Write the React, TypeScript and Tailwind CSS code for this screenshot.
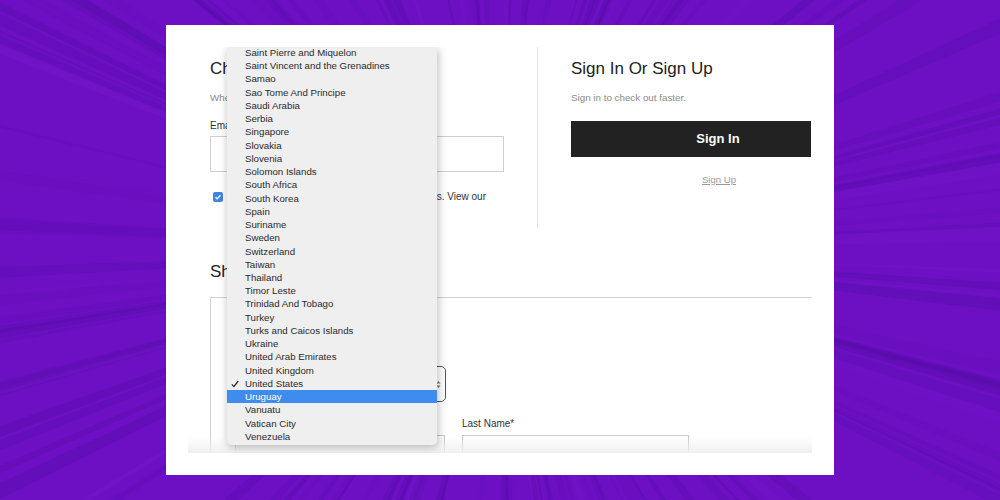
import React from 'react';

const COUNTRIES = [
  'Saint Pierre and Miquelon',
  'Saint Vincent and the Grenadines',
  'Samao',
  'Sao Tome And Principe',
  'Saudi Arabia',
  'Serbia',
  'Singapore',
  'Slovakia',
  'Slovenia',
  'Solomon Islands',
  'South Africa',
  'South Korea',
  'Spain',
  'Suriname',
  'Sweden',
  'Switzerland',
  'Taiwan',
  'Thailand',
  'Timor Leste',
  'Trinidad And Tobago',
  'Turkey',
  'Turks and Caicos Islands',
  'Ukraine',
  'United Arab Emirates',
  'United Kingdom',
  'United States',
  'Uruguay',
  'Vanuatu',
  'Vatican City',
  'Venezuela',
];

const SELECTED = 'United States';
const HOVERED = 'Uruguay';

// sunburst streaks behind the card
const Burst = () => {
  let seed = 11;
  const rnd = () => {
    seed = (seed * 9301 + 49297) % 233280;
    return seed / 233280;
  };
  const cx = 500;
  const cy = 250;
  const R = 900;
  const rays = Array.from({ length: 160 }, (_, i) => {
    const a = rnd() * Math.PI * 2;
    const w = (0.15 + rnd() * 0.7) * (Math.PI / 180);
    const dark = rnd() > 0.2;
    const op = dark ? 0.08 + rnd() * 0.22 : 0.06 + rnd() * 0.1;
    const pts = [
      `${cx},${cy}`,
      `${cx + R * Math.cos(a - w)},${cy + R * Math.sin(a - w)}`,
      `${cx + R * Math.cos(a + w)},${cy + R * Math.sin(a + w)}`,
    ].join(' ');
    return <polygon key={i} points={pts} fill={dark ? '#4b0a9c' : '#8226d8'} opacity={op} />;
  });
  return (
    <svg className="absolute inset-0" width="1000" height="500" viewBox="0 0 1000 500">
      <rect width="1000" height="500" fill="#6d10c4" />
      {rays}
    </svg>
  );
};

export default function App() {
  return (
    <div
      className="relative w-[1000px] h-[500px] overflow-hidden flex items-center justify-center"
      style={{ fontFamily: '"Liberation Sans", Arial, sans-serif' }}
    >
      <Burst />

      <div className="relative w-[668px] h-[450px] bg-white pt-[22px] pl-[22px]">
        {/* screenshot area */}
        <div className="relative w-[624px] h-[406px] overflow-hidden pl-[22px]">
          {/* top row */}
          <div className="flex h-[181px]">
            <div className="w-[328px] border-r border-[#e6e6e6]">
              <h1 className="mt-[11px] text-[17px] leading-[22px] text-[#222]">Checkout</h1>
              <p className="mt-[12px] text-[9.8px] leading-[12px] text-[#8a8a8a]">
                Where should we send your order confirmation?
              </p>
              <label className="block mt-[16px] text-[10px] leading-[12px] text-[#333]">Email Address*</label>
              <div className="mt-[4px] w-[294px] h-[36px] border border-[#cfcfcf]" />
              <div className="mt-[19px] flex items-center w-[294px]">
                <span className="ml-[3px] w-[10px] h-[10px] rounded-[2px] bg-[#3d86e4] flex items-center justify-center">
                  <svg width="8" height="8" viewBox="0 0 8 8">
                    <path d="M1.5 4.2 L3.2 5.8 L6.5 2.2" fill="none" stroke="#fff" strokeWidth="1.3" />
                  </svg>
                </span>
                <span className="w-[263px] text-right text-[10px] leading-[12px] text-[#333] whitespace-nowrap overflow-hidden">
                  I agree to the terms. View our
                </span>
              </div>
            </div>

            <div className="pl-[33px] w-[273px]">
              <h2 className="mt-[11px] text-[17px] leading-[22px] text-[#222]">Sign In Or Sign Up</h2>
              <p className="mt-[12px] text-[9.8px] leading-[12px] text-[#8a8a8a]">Sign in to check out faster.</p>
              <button className="mt-[17px] w-[240px] h-[36px] bg-[#222] text-white text-[13px] font-bold flex items-center justify-center pl-[54px]">
                Sign In
              </button>
              <div className="mt-[17px] w-[240px] flex justify-center pl-[56px]">
                <span className="text-[9.6px] leading-[12px] text-[#9a9a9a] underline">Sign Up</span>
              </div>
            </div>
          </div>

          {/* shipping */}
          <h2 className="mt-[33px] text-[17px] leading-[22px] text-[#222]">Shipping</h2>
          <div className="mt-[14px] w-[602px] h-[200px] border-t border-l border-[#d2d2d2] pl-[24px]">
            <div className="mt-[68px] w-[211px] h-[36px] border border-[#555] rounded-[5px] flex items-center justify-end pr-[4px]">
              <svg width="5" height="9" viewBox="0 0 5 9">
                <path d="M0.5 3.5 L2.5 1 L4.5 3.5 Z M0.5 5.5 L2.5 8 L4.5 5.5 Z" fill="#777" />
              </svg>
            </div>
            <div className="mt-[16px] flex gap-[17px]">
              <div className="w-[210px]">
                <label className="block text-[10px] leading-[12px] text-[#333]">First Name*</label>
                <div className="mt-[5px] h-[36px] border border-[#c8c8c8]" />
              </div>
              <div className="w-[227px]">
                <label className="block text-[10px] leading-[12px] text-[#333]">Last Name*</label>
                <div className="mt-[5px] h-[36px] border border-[#c8c8c8]" />
              </div>
            </div>
          </div>

          {/* bottom fade of the screenshot */}
          <div className="absolute left-0 right-0 bottom-0 h-[16px] bg-gradient-to-b from-white/0 to-[#f0f0f0]" />

          {/* open country dropdown */}
          <div className="absolute left-[39px] top-0 w-[210px] h-[398px] bg-[#efefef] rounded-b-[5px] shadow-[1px_2px_10px_rgba(0,0,0,0.28)] overflow-hidden">
            <ul className="-mt-[1px]">
              {COUNTRIES.map(c => (
                <li
                  key={c}
                  className={`relative h-[13.24px] leading-[13.24px] pl-[18px] text-[9.7px] whitespace-nowrap ${
                    c === HOVERED ? 'bg-[#3f8cef] text-white' : 'text-[#2a2a2a]'
                  }`}
                >
                  {c === SELECTED && (
                    <svg className="absolute left-[4px] top-[3px]" width="8" height="8" viewBox="0 0 8 8">
                      <path d="M0.8 4.4 L2.9 6.6 L7.2 1" fill="none" stroke="#2a2a2a" strokeWidth="1.3" />
                    </svg>
                  )}
                  {c}
                </li>
              ))}
            </ul>
          </div>
        </div>
      </div>
    </div>
  );
}
